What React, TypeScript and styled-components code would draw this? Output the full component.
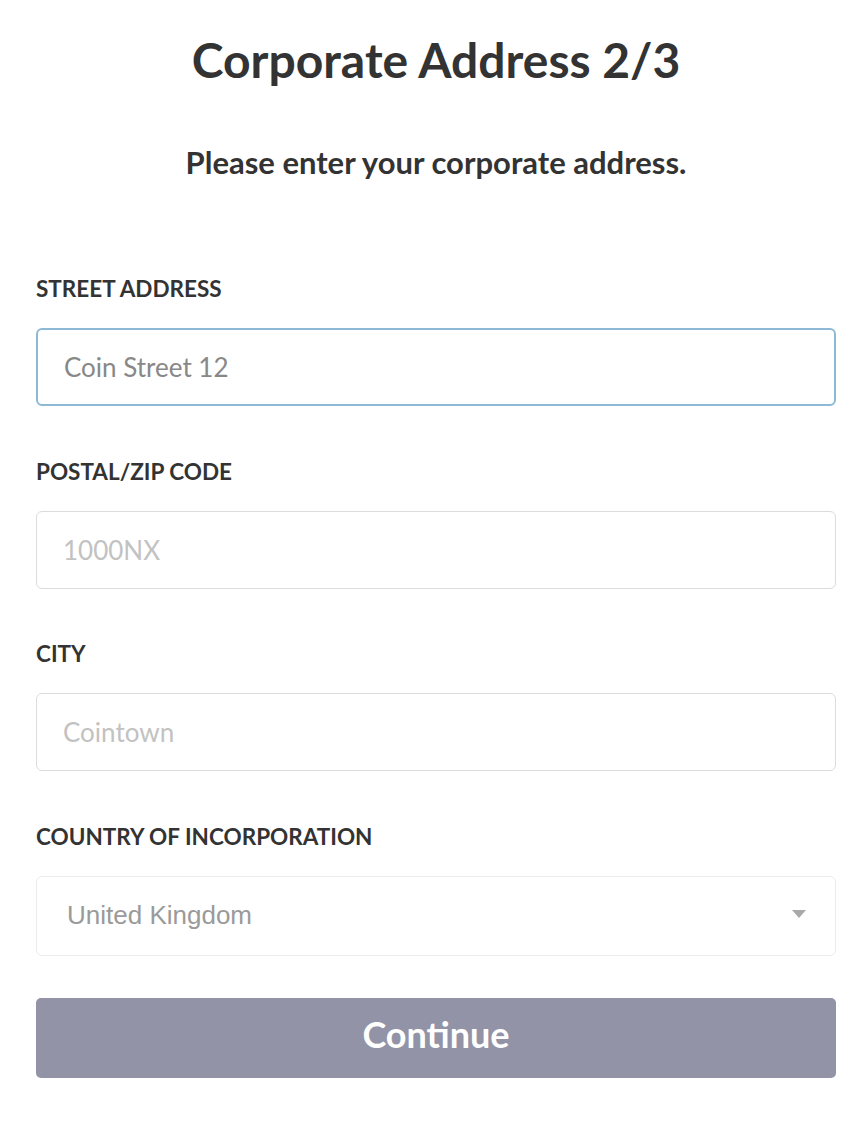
import React, { useState } from 'react';
import styled, { createGlobalStyle } from 'styled-components';

const GlobalStyle = createGlobalStyle`
  * {
    box-sizing: border-box;
  }
  body {
    margin: 0;
    background: #ffffff;
    font-family: Lato, "Noto Sans", sans-serif;
    color: #333333;
  }
`;

const Page = styled.div`
  padding: 28px 32px 40px 36px;
`;

const Title = styled.h1`
  margin: 0;
  text-align: center;
  font-size: 48px;
  font-weight: 700;
  line-height: 64px;
  color: #333333;
`;

const Subtitle = styled.p`
  margin: 50px 0 0;
  text-align: center;
  font-size: 31px;
  font-weight: 700;
  line-height: 40px;
  color: #333333;
`;

const Form = styled.form`
  margin-top: 94px;
  display: flex;
  flex-direction: column;
`;

const Field = styled.div`
  display: flex;
  flex-direction: column;
  gap: 26px;
  margin-bottom: 52.5px;
`;

const Label = styled.label`
  font-size: 22.5px;
  font-weight: 700;
  line-height: 26px;
  text-transform: uppercase;
  color: #333333;
`;

const Input = styled.input<{ $focused?: boolean }>`
  width: 100%;
  height: 78px;
  padding: 0 26px;
  border-style: solid;
  border-color: ${(p) => (p.$focused ? '#8db8d6' : '#dcdcdc')};
  border-width: ${(p) => (p.$focused ? '2px' : '1px')};
  border-radius: 6px;
  font-family: Lato, "Noto Sans", sans-serif;
  font-size: 26px;
  color: #888888;
  background: #ffffff;
  outline: none;

  &::placeholder {
    color: #c2c2c2;
  }
`;

const SelectBox = styled.div`
  position: relative;
  height: 80px;
  border: 1px solid #ececec;
  border-radius: 6px;
  display: flex;
  align-items: center;
  padding: 0 30px;
  font-family: "Liberation Sans", Arial, sans-serif;
  font-size: 26px;
  color: #9a9a9a;
`;

const Arrow = styled.span`
  position: absolute;
  right: 29px;
  top: 33px;
  width: 0;
  height: 0;
  border-left: 7px solid transparent;
  border-right: 7px solid transparent;
  border-top: 8px solid #a9a9a9;
`;

const Button = styled.button`
  margin-top: -10px;
  height: 80px;
  padding: 0 0 8px;
  width: 100%;
  border: none;
  border-radius: 5px;
  background: #9293a7;
  color: #ffffff;
  font-family: Lato, "Noto Sans", sans-serif;
  font-size: 36px;
  font-weight: 700;
  cursor: pointer;
`;

const App = () => {
  const [street, setStreet] = useState('Coin Street 12');
  const [zip, setZip] = useState('');
  const [city, setCity] = useState('');

  return (
    <Page>
      <GlobalStyle />
      <Title>Corporate Address 2/3</Title>
      <Subtitle>Please enter your corporate address.</Subtitle>
      <Form onSubmit={(e) => e.preventDefault()}>
        <Field>
          <Label htmlFor="street">Street Address</Label>
          <Input id="street" $focused value={street} onChange={(e) => setStreet(e.target.value)} />
        </Field>
        <Field>
          <Label htmlFor="zip">Postal/Zip Code</Label>
          <Input id="zip" placeholder="1000NX" value={zip} onChange={(e) => setZip(e.target.value)} />
        </Field>
        <Field>
          <Label htmlFor="city">City</Label>
          <Input id="city" placeholder="Cointown" value={city} onChange={(e) => setCity(e.target.value)} />
        </Field>
        <Field>
          <Label>Country of Incorporation</Label>
          <SelectBox>
            United Kingdom
            <Arrow />
          </SelectBox>
        </Field>
        <Button type="submit">Continue</Button>
      </Form>
    </Page>
  );
};

export default App;
